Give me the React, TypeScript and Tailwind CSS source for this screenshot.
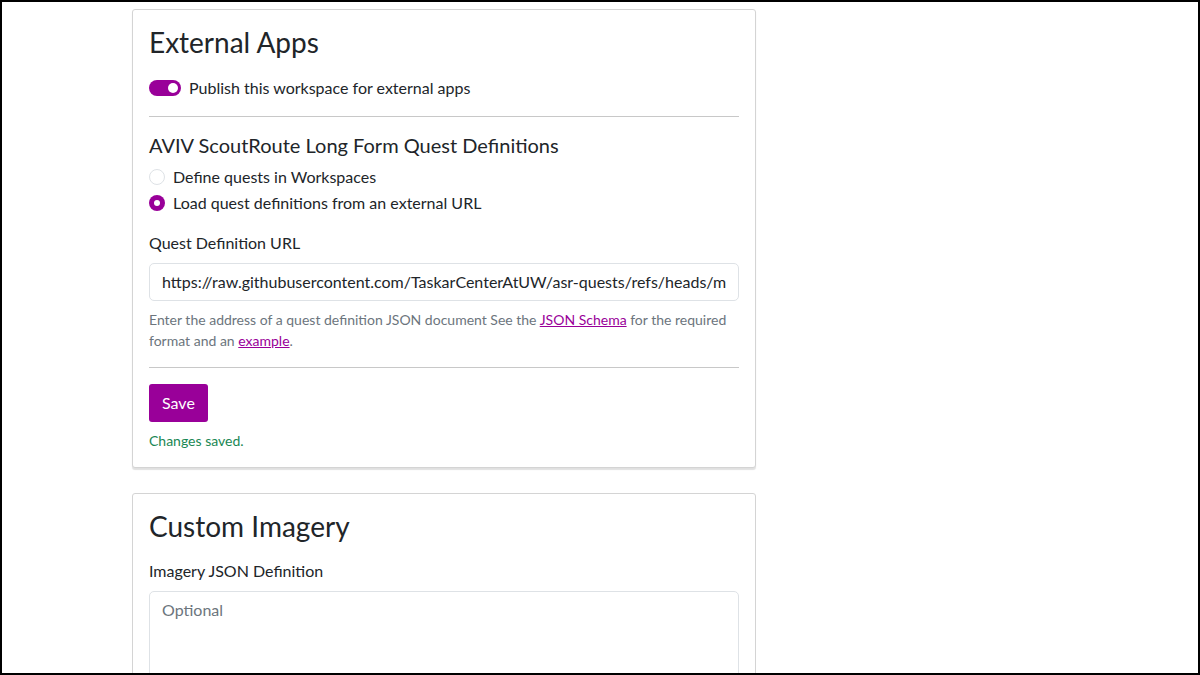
import { useState } from "react"

const font = { fontFamily: '"Segoe UI", Lato, "Noto Sans", sans-serif' }

export default function App() {
  const [url, setUrl] = useState(
    "https://raw.githubusercontent.com/TaskarCenterAtUW/asr-quests/refs/heads/main/quests.json"
  )

  return (
    <div className="h-[675px] w-[1200px] overflow-hidden border-2 border-black bg-white text-[#212529]" style={font}>
      <div className="ml-[130px] mt-[7px] w-[624px]">
        {/* External apps card */}
        <section className="rounded-[3px] border border-[#d4d4d4] bg-white p-4 shadow-[0_2px_1px_rgba(0,0,0,0.12)]">
          <h3 className="mb-4 text-[28px] leading-[1.2] font-normal">External Apps</h3>

          <label className="flex h-6 items-center gap-2 text-base">
            <span className="relative h-4 w-8 rounded-full bg-[#990099]">
              <span className="absolute right-[3px] top-[3px] h-[10px] w-[10px] rounded-full bg-white" />
            </span>
            Publish this workspace for external apps
          </label>

          <hr className="my-4 border-t border-[#c8c8c8]" />

          <h5 className="mb-2 text-xl leading-6 font-normal">AVIV ScoutRoute Long Form Quest Definitions</h5>

          <div className="mb-4 flex flex-col gap-[2px]">
            <label className="flex h-6 items-center gap-2 text-base">
              <span className="h-4 w-4 rounded-full border border-[#dee2e6] bg-white" />
              Define quests in Workspaces
            </label>
            <label className="flex h-6 items-center gap-2 text-base">
              <span className="flex h-4 w-4 items-center justify-center rounded-full bg-[#990099]">
                <span className="h-[6px] w-[6px] rounded-full bg-white" />
              </span>
              Load quest definitions from an external URL
            </label>
          </div>

          <label className="mb-2 block text-base leading-6">Quest Definition URL</label>
          <input
            value={url}
            onChange={(e) => setUrl(e.target.value)}
            className="block h-[38px] w-full rounded-[5px] border border-[#dee2e6] px-3 text-base text-[#212529] outline-none"
            style={font}
          />
          <p className="mt-2 text-sm leading-[21px] text-[#6c757d]">
            Enter the address of a quest definition JSON document See the{" "}
            <a href="#" className="text-[#990099] underline">JSON Schema</a> for the required format and an{" "}
            <a href="#" className="text-[#990099] underline">example</a>.
          </p>

          <hr className="my-4 border-t border-[#c8c8c8]" />

          <button className="h-[38px] rounded-[3px] bg-[#990099] px-[13px] text-base text-white" style={font}>
            Save
          </button>
          <p className="mt-2 text-sm leading-[21px] text-[#198754]">Changes saved.</p>
        </section>

        {/* Custom imagery card */}
        <section className="mt-[25px] rounded-[3px] border border-[#d4d4d4] bg-white p-4">
          <h3 className="mb-4 text-[28px] leading-[1.2] font-normal">Custom Imagery</h3>
          <label className="mb-2 block text-base leading-6">Imagery JSON Definition</label>
          <textarea
            placeholder="Optional"
            className="block h-[120px] w-full resize-none rounded-[5px] border border-[#dee2e6] px-3 py-[6px] text-base leading-6 outline-none placeholder:text-[#6c757d]"
            style={font}
          />
        </section>
      </div>
    </div>
  )
}
